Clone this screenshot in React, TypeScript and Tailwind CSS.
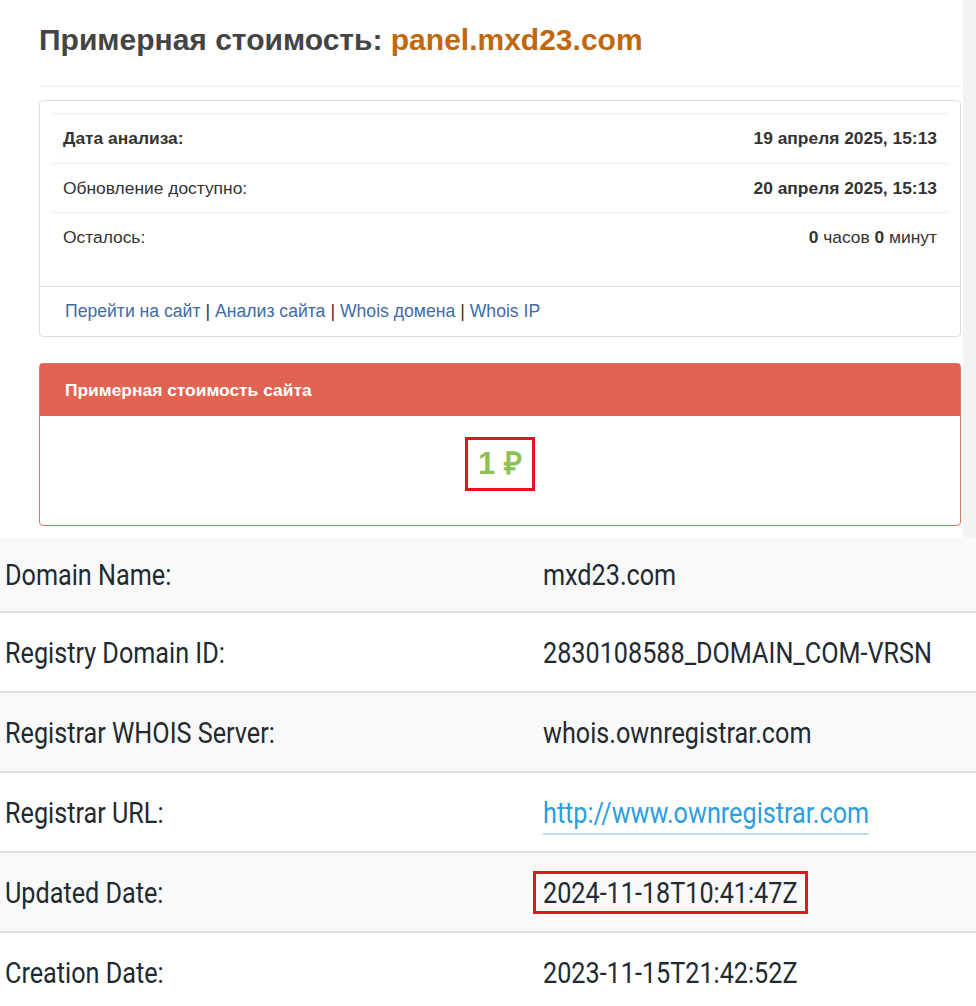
const rows = [
  { label: "Domain Name:", value: "mxd23.com" },
  { label: "Registry Domain ID:", value: "2830108588_DOMAIN_COM-VRSN" },
  { label: "Registrar WHOIS Server:", value: "whois.ownregistrar.com" },
  { label: "Registrar URL:", value: "http://www.ownregistrar.com", link: true },
  { label: "Updated Date:", value: "2024-11-18T10:41:47Z", boxed: true },
  { label: "Creation Date:", value: "2023-11-15T21:42:52Z" },
];

const Condensed = ({ children }: { children: React.ReactNode }) => (
  <span className="inline-block origin-left scale-x-[0.84] whitespace-nowrap">{children}</span>
);

const WhoisValue = ({ row }: { row: (typeof rows)[number] }) => {
  if (row.link) {
    return (
      <span className="mt-[4px] inline-block origin-left scale-x-[0.84] whitespace-nowrap border-b-2 border-[#b9def2] leading-[40px] text-[#2b9de0]">
        {row.value}
      </span>
    );
  }
  if (row.boxed) {
    return (
      <span className="-ml-[10px] flex h-[43px] w-[275px] items-center border-[3px] border-[#e3161f] pl-[7px]">
        <Condensed>{row.value}</Condensed>
      </span>
    );
  }
  return <Condensed>{row.value}</Condensed>;
};

export default function App() {
  return (
    <div className="w-[976px] font-['Liberation_Sans',Arial,sans-serif] text-[#333]">
      {/* top part: site estimate */}
      <div className="flex">
        <div className="w-[963px] bg-white pb-[11px] pl-[39px] pr-[2px] pt-[22px]">
          <h1 className="text-[30px] font-bold leading-[36px] text-[#444]">
            Примерная стоимость: <span className="text-[#bf680f]">panel.mxd23.com</span>
          </h1>
          <div className="mt-[28px] h-px bg-[#eee]" />

          <div className="mt-[13px] rounded-sm border border-[#ddd] bg-white text-[17.4px]">
            <div className="px-[12px] pb-[25px] pt-[12px]">
              <div className="flex h-[50px] items-center justify-between border-t border-[#eee] px-[11px]">
                <span className="font-bold">Дата анализа:</span>
                <span className="font-bold">19 апреля 2025, 15:13</span>
              </div>
              <div className="flex h-[49px] items-center justify-between border-t border-[#eee] px-[11px]">
                <span>Обновление доступно:</span>
                <span className="font-bold">20 апреля 2025, 15:13</span>
              </div>
              <div className="flex h-[49px] items-center justify-between border-t border-[#eee] px-[11px]">
                <span>Осталось:</span>
                <span>
                  <b>0</b> часов <b>0</b> минут
                </span>
              </div>
            </div>
            <div className="flex h-[50px] items-center border-t border-[#ddd] pl-[25px] text-[17.6px]">
              <a className="text-[#3d6ca8]">Перейти на сайт</a>
              <span className="px-[5px]">|</span>
              <a className="text-[#3d6ca8]">Анализ сайта</a>
              <span className="px-[5px]">|</span>
              <a className="text-[#3d6ca8]">Whois домена</a>
              <span className="px-[5px]">|</span>
              <a className="text-[#3d6ca8]">Whois IP</a>
            </div>
          </div>

          <div className="mt-[26px] rounded-sm border border-[#d9776b]">
            <div className="flex h-[52px] items-center bg-[#e36352] pl-[25px] text-[17.4px] font-bold text-white">
              Примерная стоимость сайта
            </div>
            <div className="flex h-[109px] items-start justify-center pt-[21px]">
              <span className="flex h-[54px] w-[70px] items-center justify-center border-[3px] border-[#e3161f] text-[31px] font-bold text-[#8dc153]">
                1 ₽
              </span>
            </div>
          </div>
        </div>
        <div className="flex-1 bg-[#f3f3f3]" />
      </div>

      {/* bottom part: whois table */}
      <div className="font-['Roboto',sans-serif] text-[30px] text-[#222a30]">
        {rows.map((row, i) => (
          <div
            key={row.label}
            className={`grid grid-cols-[538px_1fr] items-center border-b-2 border-[#ddd] pl-[5px] ${
              i === 0 ? "h-[76px]" : "h-[80px]"
            } ${i % 2 === 0 ? "bg-[#f9f9f9]" : "bg-white"}`}
          >
            <div>
              <Condensed>{row.label}</Condensed>
            </div>
            <div className="flex items-center">
              <WhoisValue row={row} />
            </div>
          </div>
        ))}
      </div>
    </div>
  );
}
